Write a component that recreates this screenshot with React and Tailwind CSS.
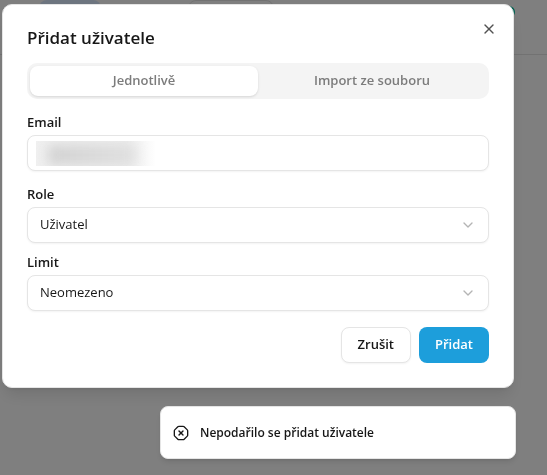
import React, { useState } from 'react';
import { ChevronDown, OctagonX, X } from 'lucide-react';

const TABS = [
  { id: 'single', label: 'Jednotlivě' },
  { id: 'import', label: 'Import ze souboru' },
];

function PageHeader() {
  return (
    <header className="h-[55px] border-b border-[#e5e5e5] flex items-start justify-between pl-[39px] pr-8">
      <div className="flex gap-[87px]">
        <div className="w-[62px] h-9 rounded-lg bg-[#dbeafe]"></div>
        <div className="w-[86px] h-9 rounded-lg border border-[#e5e5e5]"></div>
      </div>
      <div className="size-3 mt-1.5 rounded-full bg-[#00c2a0]"></div>
    </header>
  );
}

function SelectField({ id, label, options }) {
  return (
    <div className="flex flex-col gap-1.5">
      <label htmlFor={id} className="text-[13px] leading-[14px] font-semibold">{label}</label>
      <div className="grid items-center">
        <select
          id={id}
          className="col-start-1 row-start-1 appearance-none w-full h-9 px-3 rounded-lg border border-[#e5e5e5] bg-white text-[13px] shadow-xs"
        >
          {options.map((option) => (
            <option key={option}>{option}</option>
          ))}
        </select>
        <ChevronDown
          className="col-start-1 row-start-1 justify-self-end mr-[13px] size-4 text-[#b4b4b4] pointer-events-none"
          strokeWidth={2}
        />
      </div>
    </div>
  );
}

function AddUserDialog() {
  const [activeTab, setActiveTab] = useState('single');

  return (
    <div
      role="dialog"
      aria-labelledby="dialog-title"
      className="relative w-full max-w-lg flex flex-col gap-4 p-6 bg-white border border-[#e5e5e5] rounded-[10px] shadow-lg"
    >
      <h2 id="dialog-title" className="text-[17px] leading-[18px] font-semibold">Přidat uživatele</h2>
      <button type="button" aria-label="Zavřít" className="absolute top-4 right-4 text-[#525252]">
        <X className="size-4" strokeWidth={2} />
      </button>

      <div role="tablist" className="grid grid-cols-2 h-9 p-[3px] rounded-[10px] bg-[#f4f4f4]">
        {TABS.map((tab) => (
          <button
            key={tab.id}
            type="button"
            role="tab"
            aria-selected={activeTab === tab.id}
            onClick={() => setActiveTab(tab.id)}
            className={
              activeTab === tab.id
                ? 'rounded-lg text-[13px] font-semibold text-[#7c7c7c] bg-white shadow-sm'
                : 'rounded-lg text-[13px] font-semibold text-[#7c7c7c]'
            }
          >
            {tab.label}
          </button>
        ))}
      </div>

      <form className="flex flex-col gap-4" onSubmit={(e) => e.preventDefault()}>
        <div className="flex flex-col gap-1.5">
          <label htmlFor="email" className="text-[13px] leading-[14px] font-semibold">Email</label>
          <div className="relative">
            <input
              id="email"
              type="email"
              className="block w-full h-9 px-3 rounded-lg border border-[#e5e5e5] bg-white text-[13px] shadow-xs"
            />
            {/* redacted address */}
            <div className="absolute left-[9px] top-1.5 w-[120px] h-[25px] overflow-hidden pointer-events-none bg-linear-to-r from-[#f0f0f0] via-[#ececec] via-75% to-white">
              <div className="mx-3 my-1 w-[88px] h-5 bg-linear-to-r from-[#d2d2d2] to-[#e0e0e0] blur-[6px]"></div>
            </div>
          </div>
        </div>

        <div className="flex flex-col gap-3">
          <SelectField id="role" label="Role" options={['Uživatel', 'Administrátor']} />
          <SelectField id="limit" label="Limit" options={['Neomezeno', 'Vlastní']} />
        </div>

        <div className="flex justify-end gap-2">
          <button type="button" className="h-9 px-4 rounded-lg border border-[#e5e5e5] bg-white text-[13px] font-semibold shadow-xs">
            Zrušit
          </button>
          <button type="submit" className="h-9 px-4 rounded-lg bg-[#1d9edb] text-white text-[13px] font-semibold">
            Přidat
          </button>
        </div>
      </form>
    </div>
  );
}

function Toast({ message }) {
  return (
    <div
      role="status"
      className="w-full max-w-[356px] flex items-center gap-[11px] px-3 py-4 bg-white border border-[#e5e5e5] rounded-lg shadow-md text-[12px] leading-[19px] font-semibold"
    >
      <OctagonX className="size-4" />
      <span>{message}</span>
    </div>
  );
}

export default function App() {
  return (
    <div className="min-h-screen bg-white text-[#171717] font-['Open_Sans','Noto_Sans',sans-serif]">
      <PageHeader />
      <div className="fixed inset-0 bg-black/50 overflow-hidden flex flex-col gap-[18px] pt-1 pl-0.5">
        <AddUserDialog />
        <div className="flex justify-end pr-[31px]">
          <Toast message="Nepodařilo se přidat uživatele" />
        </div>
      </div>
    </div>
  );
}
